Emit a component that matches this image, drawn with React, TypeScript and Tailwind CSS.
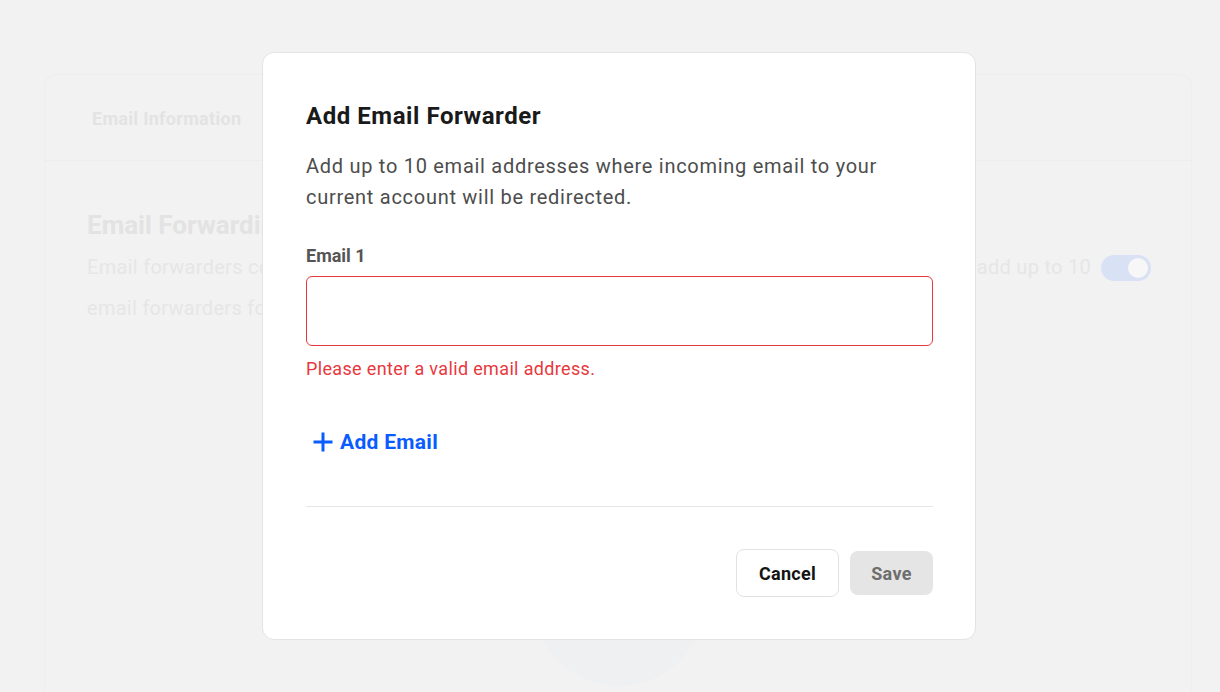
import { useState } from 'react'

// Email settings page with the "Add Email Forwarder" dialog open on top.
// The page behind the dialog is drawn washed out, as it sits under the scrim.

function Toggle({ on }: { on: boolean }) {
  return (
    <span
      className={`inline-flex items-center w-[50px] h-[26px] rounded-full px-[3px] shrink-0 ${
        on ? 'bg-[#d9e2f4] justify-end' : 'bg-[#e4e4e4] justify-start'
      }`}
    >
      <span className="w-[20px] h-[20px] rounded-full bg-[#f7f7f7]" />
    </span>
  )
}

function PlusIcon() {
  return (
    <svg width="22" height="22" viewBox="0 0 22 22" fill="none" aria-hidden="true">
      <path d="M11 1.5v19M1.5 11h19" stroke="currentColor" strokeWidth="3" strokeLinecap="butt" />
    </svg>
  )
}

function ForwarderDialog() {
  const [email, setEmail] = useState('')

  return (
    <div className="absolute left-[262px] top-[52px] w-[714px] rounded-[12px] border border-[#e3e3e3] bg-white pl-[43px] pr-[42px] pt-[48px] pb-[42px]">
      <h2 className="text-[24px] leading-[30px] font-bold tracking-[0.55px] text-[#1a1a1a]">Add Email Forwarder</h2>
      <p className="mt-[20px] text-[20px] leading-[31px] tracking-[0.72px] text-[#4d4d4d] max-w-[600px]">
        Add up to 10 email addresses where incoming email to your current account will be redirected.
      </p>

      <label className="block mt-[31px] text-[18px] leading-[24px] font-bold text-[#555555]">Email 1</label>
      <input
        value={email}
        onChange={(e) => setEmail(e.target.value)}
        className="mt-[8px] block w-full h-[70px] rounded-[6px] border border-[#e8383d] px-4 text-[18px] outline-none"
      />
      <p className="mt-[11px] text-[18px] leading-[24px] tracking-[0.35px] text-[#e8383d]">
        Please enter a valid email address.
      </p>

      <button className="mt-[47px] ml-[6px] flex items-center gap-[6px] text-[#0b5cff] text-[21px] leading-[28px] font-bold tracking-[0.3px]">
        <PlusIcon />
        Add Email
      </button>

      <div className="mt-[50px] border-t border-[#e6e6e6]" />

      <div className="mt-[42px] flex items-center justify-end gap-[11px]">
        <button className="h-[48px] w-[103px] rounded-[8px] border border-[#e2e2e2] bg-white text-[18px] font-bold tracking-[0.3px] text-[#141414]">
          Cancel
        </button>
        <button className="h-[44px] w-[83px] rounded-[8px] bg-[#e5e5e5] text-[18px] font-bold tracking-[0.3px] text-[#6e6e6e]">
          Save
        </button>
      </div>
    </div>
  )
}

export default function App() {
  return (
    <div
      className="relative h-[692px] overflow-hidden bg-[#f2f2f2] px-[44px] pt-[74px]"
      style={{ fontFamily: 'Roboto, "Noto Sans", sans-serif' }}
    >
      {/* Settings card behind the dialog */}
      <section className="w-[1148px] h-[700px] rounded-[12px] border border-[#eeeeee]">
        <div className="h-[86px] border-b border-[#ededed] pl-[47px] flex items-center pt-[1px]">
          <span className="text-[18px] font-bold tracking-[0.3px] text-[#e3e3e3]">Email Information</span>
        </div>
        <div className="pl-[42px] pr-[40px] pt-[48px]">
          <h3 className="text-[26px] leading-[32px] font-bold text-[#e3e3e3]">Email Forwarding</h3>
          <div className="mt-[6px] flex items-start gap-[10px]">
            <p className="text-[20px] leading-[41px] tracking-[0.28px] text-[#e6e6e6] whitespace-nowrap">
              Email forwarders copy incoming messages sent to this account to another mailbox. You can now add up to 10
              <br />
              email forwarders for each account.
            </p>
            <span className="mt-[8px]">
              <Toggle on />
            </span>
          </div>
        </div>
      </section>

      {/* faint illustration peeking out under the dialog */}
      <div className="absolute left-[533px] top-[514px] w-[172px] h-[172px] rounded-full bg-[#eff0f2]" />

      <ForwarderDialog />
    </div>
  )
}
